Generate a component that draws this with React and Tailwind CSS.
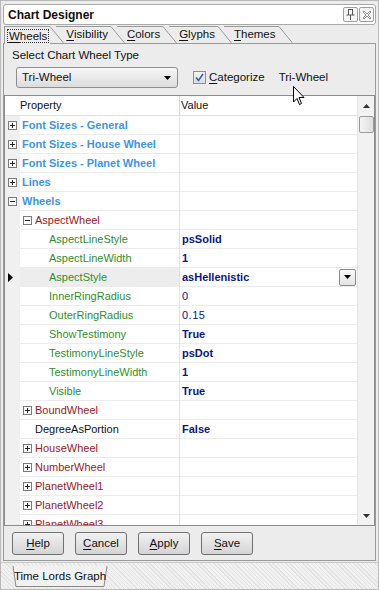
import React from "react";

const font = "font-['Liberation_Sans',Arial,sans-serif]";

const tabs = [
  { label: "Wheels", active: true },
  { label: "Visibility" },
  { label: "Colors" },
  { label: "Glyphs" },
  { label: "Themes" },
];

// kind: cat = blue bold category, sub = red sub-object, prop = green property, plain = black property
const rows = [
  { level: 0, exp: "+", name: "Font Sizes - General", kind: "cat" },
  { level: 0, exp: "+", name: "Font Sizes - House Wheel", kind: "cat" },
  { level: 0, exp: "+", name: "Font Sizes - Planet Wheel", kind: "cat" },
  { level: 0, exp: "+", name: "Lines", kind: "cat" },
  { level: 0, exp: "-", name: "Wheels", kind: "cat" },
  { level: 1, exp: "-", name: "AspectWheel", kind: "sub" },
  { level: 2, name: "AspectLineStyle", kind: "prop", value: "psSolid", bold: true },
  { level: 2, name: "AspectLineWidth", kind: "prop", value: "1", bold: true },
  { level: 2, name: "AspectStyle", kind: "prop", value: "asHellenistic", bold: true, selected: true },
  { level: 2, name: "InnerRingRadius", kind: "prop", value: "0" },
  { level: 2, name: "OuterRingRadius", kind: "prop", value: "0.15" },
  { level: 2, name: "ShowTestimony", kind: "prop", value: "True", bold: true },
  { level: 2, name: "TestimonyLineStyle", kind: "prop", value: "psDot", bold: true },
  { level: 2, name: "TestimonyLineWidth", kind: "prop", value: "1", bold: true },
  { level: 2, name: "Visible", kind: "prop", value: "True", bold: true },
  { level: 1, exp: "+", name: "BoundWheel", kind: "sub" },
  { level: 1, name: "DegreeAsPortion", kind: "plain", value: "False", bold: true },
  { level: 1, exp: "+", name: "HouseWheel", kind: "sub" },
  { level: 1, exp: "+", name: "NumberWheel", kind: "sub" },
  { level: 1, exp: "+", name: "PlanetWheel1", kind: "sub" },
  { level: 1, exp: "+", name: "PlanetWheel2", kind: "sub" },
  { level: 1, exp: "+", name: "PlanetWheel3", kind: "sub" },
];

const nameColor = {
  cat: "text-[#3d95e8] font-bold text-[11.5px]",
  sub: "text-[#9c1a1a]",
  prop: "text-[#2f8f2f]",
  plain: "text-[#111]",
};

function Expander({ sign }) {
  return (
    <div className="w-[9px] h-[9px] border border-[#7a7a7a] bg-white flex items-center justify-center shrink-0 relative">
      <div className="absolute w-[5px] h-px bg-[#222]" />
      {sign === "+" && <div className="absolute w-px h-[5px] bg-[#222]" />}
    </div>
  );
}

function Ul({ text }) {
  return (
    <>
      <span className="underline underline-offset-2">{text[0]}</span>
      {text.slice(1)}
    </>
  );
}

function Row({ r }) {
  return (
    <div className="flex h-[19px] shrink-0">
      {/* gutter */}
      <div className="w-[15px] bg-[#f0f0f0] flex items-center justify-center shrink-0">
        {r.level === 0 && <Expander sign={r.exp} />}
        {r.selected && (
          <svg width="5" height="9" viewBox="0 0 5 9" className="ml-[-4px]">
            <path d="M0 0 L5 4.5 L0 9 Z" fill="#000" />
          </svg>
        )}
      </div>
      <div
        className={`w-[159px] shrink-0 flex items-center border-b border-[#ececec] ${
          r.selected ? "bg-[#ededed]" : "bg-white"
        }`}
      >
        {r.level === 1 && (
          <div className="w-[15px] pl-[3px] shrink-0 flex">
            {r.exp && <Expander sign={r.exp} />}
          </div>
        )}
        {r.level === 2 && <div className="w-[29px] shrink-0" />}
        <span
          className={`whitespace-nowrap text-[11px] ${nameColor[r.kind]} ${
            r.level === 0 ? "pl-[2px]" : ""
          }`}
        >
          {r.name}
        </span>
      </div>
      <div className="w-px bg-[#e2e2e2] shrink-0" />
      <div className="flex-1 bg-white border-b border-[#ececec] flex items-center pl-[2px] pr-px">
        {r.value && (
          <span className={`text-[11px] text-[#0b1780] ${r.bold ? "font-bold" : "tracking-[0.5px]"}`}>
            {r.value}
          </span>
        )}
        {r.selected && (
          <div className="ml-auto w-[17px] h-[17px] border border-[#8a8a8a] rounded-[2px] bg-gradient-to-b from-[#fafafa] to-[#e4e4e4] flex items-center justify-center">
            <svg width="7" height="4" viewBox="0 0 7 4">
              <path d="M0 0 L7 0 L3.5 4 Z" fill="#000" />
            </svg>
          </div>
        )}
      </div>
    </div>
  );
}

export default function App() {
  return (
    <div className={`w-[379px] h-[590px] bg-[#ececec] border border-[#b9b9b9] flex flex-col overflow-hidden relative ${font}`}>
      {/* Title bar */}
      <div className="mt-[3px] mx-[2px] h-[21px] bg-white border border-[#a9a9a9] rounded-[3px] flex items-center pl-[4px] pr-[1px] shrink-0">
        <span className="text-[12px] font-bold text-[#111]">Chart Designer</span>
        <div className="ml-auto flex gap-[1px]">
          <div className="w-[15px] h-[15px] border border-[#a0a0a0] rounded-[2px] bg-[#f6f6f6] flex items-center justify-center">
            <svg width="9" height="11" viewBox="0 0 9 11">
              <path d="M2 0.5 H7 M2.5 0.5 V6 M6.5 0.5 V6 M0.5 6 H8.5 M4.5 6 V11" stroke="#555" fill="none" />
            </svg>
          </div>
          <div className="w-[15px] h-[15px] border border-[#a0a0a0] rounded-[2px] bg-[#f6f6f6] flex items-center justify-center">
            <svg width="10" height="10" viewBox="0 0 10 10">
              <path d="M1 2 L2 1 L5 4 L8 1 L9 2 L6 5 L9 8 L8 9 L5 6 L2 9 L1 8 L4 5 Z" stroke="#777" fill="none" strokeWidth="0.8" />
            </svg>
          </div>
        </div>
      </div>

      {/* Tabs */}
      <div className="h-[17px] mt-[1px] ml-[3px] flex items-end shrink-0 relative z-10">
        {tabs.map((t, i) => (
          <div key={t.label} className={`flex h-[17px] ${i > 0 ? "ml-[-8px]" : ""}`}>
            <div
              className={`border-t border-[#9a9a9a] flex items-center text-[11.5px] text-[#111] ${
                i === 0 ? "pl-[2px] pr-[1px] border-l bg-[#ececec] h-[18px]" : "pl-[10px] pr-[3px]"
              }`}
            >
              {t.active ? (
                <span className="border border-dotted border-[#333] px-px leading-[12px]">
                  <Ul text={t.label} />
                </span>
              ) : (
                <Ul text={t.label} />
              )}
            </div>
            <svg width="14" height="17" viewBox="0 0 14 17">
              <path d="M0 0.5 L13.5 17" stroke="#9a9a9a" fill="none" />
            </svg>
          </div>
        ))}
      </div>

      {/* Panel */}
      <div className="mx-[2px] h-[518px] border border-[#9a9a9a] flex flex-col shrink-0">
        <div className="pl-[8px] pt-[3px] h-[18px] text-[11.5px] text-[#111]">Select Chart Wheel Type</div>

        <div className="flex items-center h-[21px] mt-[5px] pl-[12px]">
          <div className="w-[162px] h-[21px] border border-[#8e8e8e] rounded-[3px] bg-gradient-to-b from-[#f7f7f7] to-[#dcdcdc] flex items-center pl-[5px] pr-[6px]">
            <span className="text-[11.5px] text-[#111]">Tri-Wheel</span>
            <svg width="7" height="4" viewBox="0 0 7 4" className="ml-auto">
              <path d="M0 0 L7 0 L3.5 4 Z" fill="#000" />
            </svg>
          </div>
          <div className="ml-[15px] w-[13px] h-[13px] border border-[#8e8e8e] bg-gradient-to-b from-[#f4f4f4] to-[#dcdcdc] flex items-center justify-center">
            <svg width="9" height="9" viewBox="0 0 9 9">
              <path d="M1 4.5 L3.5 7.5 L8 1" stroke="#3a5fa8" strokeWidth="1.6" fill="none" />
            </svg>
          </div>
          <span className="ml-[3px] text-[11.5px] text-[#111]">
            <Ul text="Categorize" />
          </span>
          <span className="ml-[14px] text-[11.5px] text-[#111]">Tri-Wheel</span>
        </div>

        {/* Property grid */}
        <div className="mt-[7px] h-[431px] border border-[#8c8c8c] flex overflow-hidden">
          <div className="flex-1 flex flex-col overflow-hidden">
            <div className="flex h-[20px] shrink-0 bg-white border-b border-[#e0e0e0]">
              <div className="w-[174px] pl-[15px] flex items-center text-[11px] text-[#111]">Property</div>
              <div className="w-px bg-[#d6d6d6]" />
              <div className="flex-1 pl-[1px] flex items-center text-[11px] text-[#111]">Value</div>
            </div>
            {rows.map((r) => (
              <Row key={r.name} r={r} />
            ))}
          </div>
          {/* Scrollbar */}
          <div className="w-[17px] bg-[#f2f2f2] border-l border-[#e4e4e4] flex flex-col items-center shrink-0">
            <div className="h-[20px] flex items-center justify-center">
              <svg width="7" height="4" viewBox="0 0 7 4">
                <path d="M3.5 0 L7 4 L0 4 Z" fill="#333" />
              </svg>
            </div>
            <div className="w-[15px] h-[17px] border border-[#9a9a9a] rounded-[2px] bg-gradient-to-r from-[#f4f4f4] to-[#dedede]" />
            <div className="flex-1" />
            <div className="h-[18px] flex items-center justify-center">
              <svg width="7" height="4" viewBox="0 0 7 4">
                <path d="M0 0 L7 0 L3.5 4 Z" fill="#333" />
              </svg>
            </div>
          </div>
        </div>

        {/* Buttons */}
        <div className="flex gap-[11px] pl-[8px] mt-[6px]">
          {["Help", "Cancel", "Apply", "Save"].map((b) => (
            <div
              key={b}
              className="w-[52px] h-[23px] border border-[#707070] rounded-[3px] bg-gradient-to-b from-[#f2f2f2] to-[#d4d4d4] flex items-center justify-center text-[11.5px] text-[#111]"
            >
              <Ul text={b} />
            </div>
          ))}
        </div>
      </div>

      {/* Bottom tab strip */}
      <div className="flex-1 mt-[1px] border-t border-[#c8c8c8] bg-[repeating-linear-gradient(45deg,#e3e3e3_0px,#e3e3e3_1px,#f1f1f1_1px,#f1f1f1_3px)] pl-[11px] pt-[3px]">
        <div className="relative w-[96px] h-[21px] flex items-center justify-center">
          <svg width="96" height="21" viewBox="0 0 96 21" className="absolute inset-0">
            <path d="M1 0 L4 20.5 L92 20.5 L95 0" fill="#f1f1f1" stroke="#8a8a8a" />
          </svg>
          <span className="relative text-[11.5px] text-[#111]">Time Lords Graph</span>
        </div>
      </div>

      {/* Mouse cursor */}
      <svg width="13" height="20" viewBox="0 0 13 20" className="absolute left-[292px] top-[85px]">
        <path d="M0.5 0.5 L0.5 16 L4 12.5 L6.5 18.5 L8.5 17.5 L6 11.5 L11 11.5 Z" fill="#fff" stroke="#000" />
      </svg>
    </div>
  );
}
